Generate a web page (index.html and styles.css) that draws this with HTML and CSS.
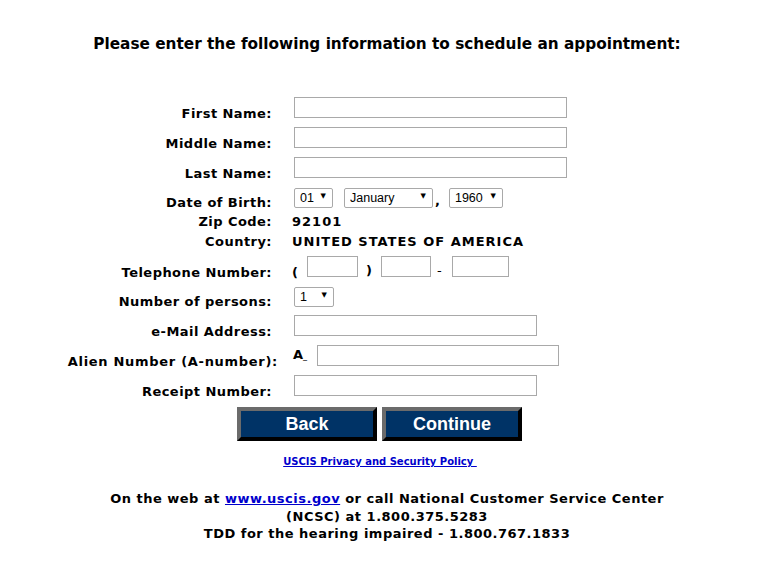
FILE: index.html
```html
<!DOCTYPE html>
<html lang="en">
<head>
<meta charset="utf-8">
<title>Schedule an Appointment</title>
<link rel="stylesheet" href="styles.css">
</head>
<body>
<div class="page">
  <h1 class="title">Please enter the following information to schedule an appointment:</h1>

  <form class="form">
    <label class="lbl">First Name:</label>
    <div class="fld"><input class="txt w273" type="text"></div>

    <label class="lbl">Middle Name:</label>
    <div class="fld"><input class="txt w273" type="text"></div>

    <label class="lbl">Last Name:</label>
    <div class="fld"><input class="txt w273" type="text"></div>

    <label class="lbl">Date of Birth:</label>
    <div class="fld">
      <span class="sel w39"><select><option>01</option></select></span>
      <span class="sel w89 ml11"><select><option>January</option></select></span>
      <span class="comma">,</span>
      <span class="sel w54"><select><option>1960</option></select></span>
    </div>

    <label class="lbl short">Zip Code:</label>
    <div class="fld short val">92101</div>

    <label class="lbl short">Country:</label>
    <div class="fld short val">UNITED STATES OF AMERICA</div>

    <label class="lbl">Telephone Number:</label>
    <div class="fld">
      <span class="punct p-open">(</span>
      <input class="txt w51" type="text">
      <span class="punct p-close">)</span>
      <input class="txt w50" type="text">
      <span class="punct p-dash">-</span>
      <input class="txt w57" type="text">
    </div>

    <label class="lbl">Number of persons:</label>
    <div class="fld"><span class="sel w40"><select><option>1</option></select></span></div>

    <label class="lbl">e-Mail Address:</label>
    <div class="fld"><input class="txt w243" type="text"></div>

    <label class="lbl lbl-wide">Alien Number (A-number):</label>
    <div class="fld"><span class="apre">A<span class="us">_</span></span><input class="txt w242" type="text"></div>

    <label class="lbl">Receipt Number:</label>
    <div class="fld"><input class="txt w243" type="text"></div>
  </form>

  <div class="buttons">
    <button class="btn" type="button">Back</button>
    <button class="btn" type="button">Continue</button>
  </div>

  <p class="privacy"><a href="#">USCIS Privacy and Security Policy&nbsp;</a></p>

  <div class="footer">
    <div>On the web at <a href="#">www.uscis.gov</a> or call National Customer Service Center</div>
    <div>(NCSC) at 1.800.375.5283</div>
    <div>TDD for the hearing impaired - 1.800.767.1833</div>
  </div>
</div>
</body>
</html>
```

FILE: styles.css
```css
html, body {
  margin: 0;
  padding: 0;
  background: #ffffff;
  color: #000000;
  font-family: "DejaVu Sans", Verdana, sans-serif;
}

.page {
  padding: 0 8px;
}

.title {
  margin: 34px 0 0 14px;
  font-size: 15.3px;
  line-height: 20px;
  font-weight: bold;
  text-align: center;
}

.form {
  margin: 43px 0 0;
  display: grid;
  grid-template-columns: 264px 1fr;
  column-gap: 22px;
  row-gap: 9px;
  align-items: end;
}

.lbl {
  justify-self: end;
  font-size: 13px;
  line-height: 13px;
  font-weight: bold;
  letter-spacing: 0.45px;
  white-space: nowrap;
  margin-bottom: -2px;
}

.lbl-wide {
  margin-right: -6px;
  letter-spacing: 0.7px;
}

.lbl.short,
.fld.short {
  line-height: 11px;
  margin-bottom: 0;
}

.fld {
  display: flex;
  align-items: flex-end;
}

.val {
  font-size: 13px;
  font-weight: bold;
  letter-spacing: 1px;
  margin-left: -2px;
}

.txt {
  box-sizing: border-box;
  height: 21px;
  margin: 0;
  padding: 1px 3px;
  border: 1px solid #a9a9a9;
  background: #ffffff;
  font-family: "Liberation Sans", Arial, sans-serif;
  font-size: 13px;
}

.w273 { width: 273px; }
.w243 { width: 243px; }
.w242 { width: 242px; }
.w51 { width: 51px; }
.w50 { width: 50px; }
.w57 { width: 57px; }

.sel {
  position: relative;
  display: inline-block;
  height: 20px;
}

.sel select {
  appearance: none;
  -webkit-appearance: none;
  box-sizing: border-box;
  width: 100%;
  height: 20px;
  margin: 0;
  padding: 0 0 0 5px;
  border: 1px solid #a9a9a9;
  border-radius: 2px;
  background: #ffffff;
  color: #000000;
  font-family: "Liberation Sans", Arial, sans-serif;
  font-size: 12.5px;
  line-height: 18px;
}

.sel::after {
  content: "\25BC";
  position: absolute;
  right: 7px;
  top: 5px;
  font-size: 7px;
  line-height: 8px;
  color: #000000;
  pointer-events: none;
}

.w39 { width: 39px; }
.w89 { width: 89px; }
.w54 { width: 54px; }
.w40 { width: 40px; }
.ml11 { margin-left: 11px; }

.comma {
  font-size: 13px;
  font-weight: bold;
  line-height: 13px;
  margin: 0 9px 0 2px;
}

.punct {
  font-size: 13px;
  font-weight: bold;
  line-height: 13px;
  margin-bottom: -2px;
}

.p-open { margin-left: -2px; margin-right: 9px; }
.p-close { margin: 0 9px 0 8px; }
.p-dash { margin: 0 10px 0 6px; font-weight: normal; }

.apre {
  font-size: 13px;
  font-weight: bold;
  line-height: 13px;
  margin: 0 10px 3px -1px;
}

.us {
  font-size: 8px;
  font-weight: normal;
}

.buttons {
  margin-top: 11px;
  padding-left: 229px;
  display: flex;
  gap: 5px;
}

.btn {
  box-sizing: border-box;
  width: 140px;
  height: 34px;
  margin: 0;
  padding: 0;
  border-style: solid;
  border-width: 4px;
  border-color: #6b6b6b #000000 #000000 #6b6b6b;
  background: #003366;
  color: #ffffff;
  font-family: "Liberation Sans", Arial, sans-serif;
  font-size: 18px;
  font-weight: bold;
  line-height: 24px;
}

.privacy {
  margin: 14px 0 0;
  text-align: center;
  font-size: 10px;
  line-height: 13px;
  font-weight: bold;
}

.privacy a,
.footer a {
  color: #0000cc;
  text-decoration: underline;
}

.footer {
  margin: 22px 0 0 14px;
  text-align: center;
  font-size: 13px;
  line-height: 17.5px;
  font-weight: bold;
  letter-spacing: 0.5px;
}
```
